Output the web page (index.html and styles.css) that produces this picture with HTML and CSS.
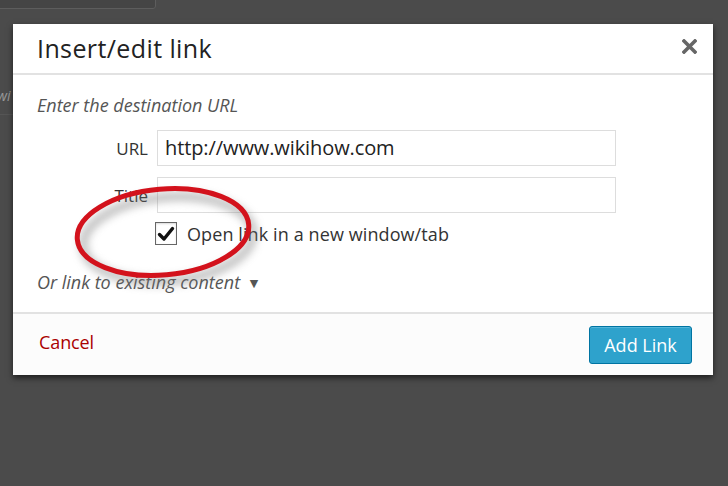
FILE: index.html
```html
<!DOCTYPE html>
<html>
<head>
<meta charset="utf-8">
<link rel="stylesheet" href="styles.css">
</head>
<body>
<div class="backdrop">
  <div class="topbox"></div>
  <div class="sidestrip"><span class="sidetext">wi</span></div>
</div>
<div class="modal">
  <div class="header">
    <h1 class="title">Insert/edit link</h1>
    <svg class="close" width="15" height="15" viewBox="0 0 15 15"><path d="M2 2 L13 13 M13 2 L2 13" stroke="#666" stroke-width="3.6" stroke-linecap="square"/></svg>
  </div>
  <div class="body">
    <p class="hint">Enter the destination URL</p>
    <div class="form">
      <label class="label">URL</label>
      <div class="input">http://www.wikihow.com</div>
      <label class="label">Title</label>
      <div class="input"></div>
      <div></div>
      <div class="checkrow">
        <span class="checkbox"><svg width="20" height="20" viewBox="0 0 20 20"><path d="M3.5 10.5 L8 15 L16.5 4.5" fill="none" stroke="#111" stroke-width="3.4" stroke-linecap="round" stroke-linejoin="round"/></svg></span>
        <span class="checktext">Open link in a new window/tab</span>
      </div>
    </div>
    <p class="existing">Or link to existing content <span class="tri">&#9660;</span></p>
  </div>
  <div class="footer">
    <span class="cancel">Cancel</span>
    <span class="button">Add Link</span>
  </div>
  <svg class="circle" width="210" height="130" viewBox="0 0 210 130">
    <defs>
      <filter id="sh" x="-20%" y="-30%" width="140%" height="160%">
        <feGaussianBlur stdDeviation="4"/>
      </filter>
    </defs>
    <ellipse cx="106" cy="66" rx="85" ry="42" transform="rotate(-5 106 66)" fill="none" stroke="#777" stroke-width="8" opacity="0.5" filter="url(#sh)"/>
    <ellipse cx="101" cy="59" rx="86" ry="43" transform="rotate(-5 101 59)" fill="none" stroke="#d3121c" stroke-width="5"/>
  </svg>
</div>
</body>
</html>
```

FILE: styles.css
```css
html, body {
  margin: 0;
  padding: 0;
}
body {
  width: 728px;
  height: 486px;
  background: #4b4b4b;
  font-family: "Open Sans", "DejaVu Sans", sans-serif;
  position: relative;
  overflow: hidden;
}
.backdrop {
  position: absolute;
  inset: 0;
}
.topbox {
  position: absolute;
  left: -4px;
  top: -6px;
  width: 158px;
  height: 13px;
  border: 1px solid #5d5d5d;
  border-radius: 3px;
  background: #454545;
}
.sidestrip {
  position: absolute;
  left: 0;
  top: 24px;
  width: 13px;
  height: 90px;
  border-bottom: 1px solid #555;
}
.sidetext {
  position: absolute;
  left: -3px;
  top: 62px;
  font-size: 14px;
  font-style: italic;
  color: #999;
}
.modal {
  position: absolute;
  left: 13px;
  top: 24px;
  width: 700px;
  height: 351px;
  background: #fff;
  box-shadow: 0 3px 6px rgba(0,0,0,0.6);
  display: flex;
  flex-direction: column;
}
.header {
  height: 51px;
  border-bottom: 2px solid #e2e2e2;
  display: flex;
  align-items: center;
  justify-content: space-between;
  padding: 0 16px 0 24px;
  box-sizing: border-box;
  flex: none;
}
.title {
  margin: 0;
  font-size: 25px;
  font-weight: 400;
  color: #222;
  letter-spacing: 0.4px;
  position: relative;
  top: -1px;
}
.close {
  display: block;
  position: relative;
  top: -2px;
}
.body {
  flex: 1;
  padding: 0 24px;
}
.hint {
  margin: 18px 0 13px;
  font-size: 18px;
  font-style: italic;
  color: #555;
  line-height: 24px;
}
.form {
  display: grid;
  grid-template-columns: 111px 459px;
  column-gap: 9px;
  row-gap: 11px;
  align-items: center;
}
.label {
  text-align: right;
  font-size: 17px;
  color: #333;
}
.input {
  height: 36px;
  border: 1px solid #ddd;
  box-sizing: border-box;
  font-size: 20px;
  color: #222;
  line-height: 34px;
  padding-left: 7px;
  letter-spacing: -0.1px;
}
.checkrow {
  display: flex;
  align-items: center;
  margin-left: -2px;
  margin-top: -3px;
  height: 25px;
}
.checkbox {
  width: 20px;
  height: 21px;
  border: 1px solid #666;
  display: flex;
  align-items: center;
  justify-content: center;
  box-shadow: inset 0 1px 2px rgba(0,0,0,0.15);
}
.checktext {
  margin-left: 10px;
  font-size: 18px;
  color: #333;
  letter-spacing: 0.1px;
}
.existing {
  margin: 24px 0 0;
  font-size: 18px;
  line-height: 24px;
  font-style: italic;
  color: #555;
}
.tri {
  font-style: normal;
  font-size: 11px;
  margin-left: 5px;
  color: #555;
  position: relative;
  top: -2px;
}
.footer {
  height: 63px;
  border-top: 2px solid #e2e2e2;
  background: #fcfcfc;
  box-sizing: border-box;
  display: flex;
  align-items: center;
  justify-content: space-between;
  padding: 0 21px 0 26px;
  flex: none;
}
.cancel {
  color: #a00;
  font-size: 18px;
  letter-spacing: -0.1px;
  position: relative;
  top: -3px;
}
.button {
  width: 103px;
  height: 38px;
  box-sizing: border-box;
  background: #2ea2cc;
  border: 1px solid #0074a2;
  border-radius: 3px;
  color: #fff;
  font-size: 18px;
  display: flex;
  align-items: center;
  justify-content: center;
  box-shadow: inset 0 1px 0 rgba(120,200,230,0.5);
}
.circle {
  position: absolute;
  left: 49px;
  top: 149px;
  pointer-events: none;
}
```
